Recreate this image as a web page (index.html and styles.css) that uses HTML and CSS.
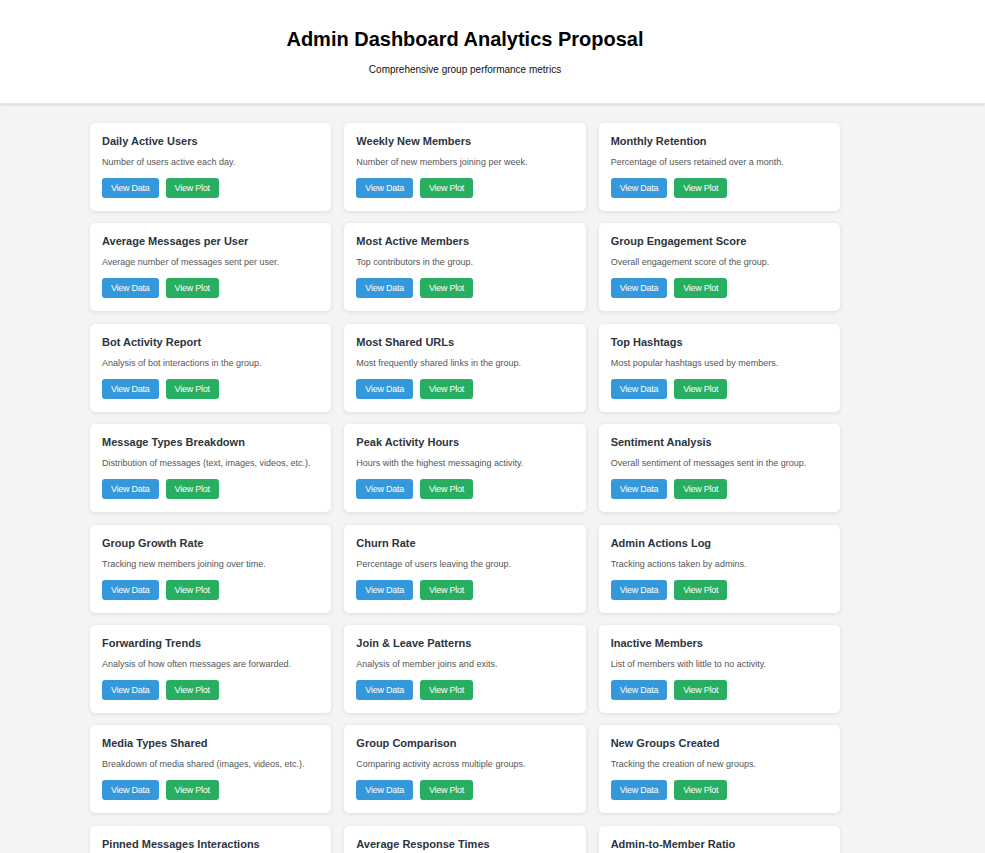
FILE: index.html
```html
<!DOCTYPE html>
<html lang="en">
<head>
<meta charset="utf-8">
<title>Admin Dashboard Analytics Proposal</title>
<link rel="stylesheet" href="styles.css">
</head>
<body>
<header class="header">
  <div class="header-inner">
    <h1 class="title">Admin Dashboard Analytics Proposal</h1>
    <p class="subtitle">Comprehensive group performance metrics</p>
  </div>
</header>
<main class="main">
  <div class="grid">
    <div class="card"><h2 class="card-title">Daily Active Users</h2><p class="card-desc">Number of users active each day.</p><div class="actions"><button class="btn btn-data">View Data</button><button class="btn btn-plot">View Plot</button></div></div>
    <div class="card"><h2 class="card-title">Weekly New Members</h2><p class="card-desc">Number of new members joining per week.</p><div class="actions"><button class="btn btn-data">View Data</button><button class="btn btn-plot">View Plot</button></div></div>
    <div class="card"><h2 class="card-title">Monthly Retention</h2><p class="card-desc">Percentage of users retained over a month.</p><div class="actions"><button class="btn btn-data">View Data</button><button class="btn btn-plot">View Plot</button></div></div>
    <div class="card"><h2 class="card-title">Average Messages per User</h2><p class="card-desc">Average number of messages sent per user.</p><div class="actions"><button class="btn btn-data">View Data</button><button class="btn btn-plot">View Plot</button></div></div>
    <div class="card"><h2 class="card-title">Most Active Members</h2><p class="card-desc">Top contributors in the group.</p><div class="actions"><button class="btn btn-data">View Data</button><button class="btn btn-plot">View Plot</button></div></div>
    <div class="card"><h2 class="card-title">Group Engagement Score</h2><p class="card-desc">Overall engagement score of the group.</p><div class="actions"><button class="btn btn-data">View Data</button><button class="btn btn-plot">View Plot</button></div></div>
    <div class="card"><h2 class="card-title">Bot Activity Report</h2><p class="card-desc">Analysis of bot interactions in the group.</p><div class="actions"><button class="btn btn-data">View Data</button><button class="btn btn-plot">View Plot</button></div></div>
    <div class="card"><h2 class="card-title">Most Shared URLs</h2><p class="card-desc">Most frequently shared links in the group.</p><div class="actions"><button class="btn btn-data">View Data</button><button class="btn btn-plot">View Plot</button></div></div>
    <div class="card"><h2 class="card-title">Top Hashtags</h2><p class="card-desc">Most popular hashtags used by members.</p><div class="actions"><button class="btn btn-data">View Data</button><button class="btn btn-plot">View Plot</button></div></div>
    <div class="card"><h2 class="card-title">Message Types Breakdown</h2><p class="card-desc">Distribution of messages (text, images, videos, etc.).</p><div class="actions"><button class="btn btn-data">View Data</button><button class="btn btn-plot">View Plot</button></div></div>
    <div class="card"><h2 class="card-title">Peak Activity Hours</h2><p class="card-desc">Hours with the highest messaging activity.</p><div class="actions"><button class="btn btn-data">View Data</button><button class="btn btn-plot">View Plot</button></div></div>
    <div class="card"><h2 class="card-title">Sentiment Analysis</h2><p class="card-desc">Overall sentiment of messages sent in the group.</p><div class="actions"><button class="btn btn-data">View Data</button><button class="btn btn-plot">View Plot</button></div></div>
    <div class="card"><h2 class="card-title">Group Growth Rate</h2><p class="card-desc">Tracking new members joining over time.</p><div class="actions"><button class="btn btn-data">View Data</button><button class="btn btn-plot">View Plot</button></div></div>
    <div class="card"><h2 class="card-title">Churn Rate</h2><p class="card-desc">Percentage of users leaving the group.</p><div class="actions"><button class="btn btn-data">View Data</button><button class="btn btn-plot">View Plot</button></div></div>
    <div class="card"><h2 class="card-title">Admin Actions Log</h2><p class="card-desc">Tracking actions taken by admins.</p><div class="actions"><button class="btn btn-data">View Data</button><button class="btn btn-plot">View Plot</button></div></div>
    <div class="card"><h2 class="card-title">Forwarding Trends</h2><p class="card-desc">Analysis of how often messages are forwarded.</p><div class="actions"><button class="btn btn-data">View Data</button><button class="btn btn-plot">View Plot</button></div></div>
    <div class="card"><h2 class="card-title">Join &amp; Leave Patterns</h2><p class="card-desc">Analysis of member joins and exits.</p><div class="actions"><button class="btn btn-data">View Data</button><button class="btn btn-plot">View Plot</button></div></div>
    <div class="card"><h2 class="card-title">Inactive Members</h2><p class="card-desc">List of members with little to no activity.</p><div class="actions"><button class="btn btn-data">View Data</button><button class="btn btn-plot">View Plot</button></div></div>
    <div class="card"><h2 class="card-title">Media Types Shared</h2><p class="card-desc">Breakdown of media shared (images, videos, etc.).</p><div class="actions"><button class="btn btn-data">View Data</button><button class="btn btn-plot">View Plot</button></div></div>
    <div class="card"><h2 class="card-title">Group Comparison</h2><p class="card-desc">Comparing activity across multiple groups.</p><div class="actions"><button class="btn btn-data">View Data</button><button class="btn btn-plot">View Plot</button></div></div>
    <div class="card"><h2 class="card-title">New Groups Created</h2><p class="card-desc">Tracking the creation of new groups.</p><div class="actions"><button class="btn btn-data">View Data</button><button class="btn btn-plot">View Plot</button></div></div>
    <div class="card"><h2 class="card-title">Pinned Messages Interactions</h2><p class="card-desc">Interactions with pinned messages.</p><div class="actions"><button class="btn btn-data">View Data</button><button class="btn btn-plot">View Plot</button></div></div>
    <div class="card"><h2 class="card-title">Average Response Times</h2><p class="card-desc">Average time taken to respond to messages.</p><div class="actions"><button class="btn btn-data">View Data</button><button class="btn btn-plot">View Plot</button></div></div>
    <div class="card"><h2 class="card-title">Admin-to-Member Ratio</h2><p class="card-desc">Ratio of admins to regular members.</p><div class="actions"><button class="btn btn-data">View Data</button><button class="btn btn-plot">View Plot</button></div></div>
  </div>
</main>
</body>
</html>
```

FILE: styles.css
```css
* { box-sizing: border-box; }

html, body {
  margin: 0;
  padding: 0;
  background: #f4f4f4;
  font-family: "Liberation Sans", Arial, sans-serif;
}

.header {
  background: #ffffff;
  height: 104px;
  box-shadow: 0 1px 3px rgba(0, 0, 0, 0.12);
  border-bottom: 1px solid #e6e6e6;
}

.header-inner {
  width: 930px;
  padding-top: 27px;
  text-align: center;
}

.title {
  margin: 0;
  font-size: 20px;
  font-weight: bold;
  line-height: 24px;
  color: #000000;
}

.subtitle {
  margin: 13px 0 0;
  font-size: 10px;
  line-height: 12px;
  color: #111111;
}

.main {
  width: 930px;
  padding-top: 19px;
}

.grid {
  width: 750px;
  margin: 0 auto;
  display: grid;
  grid-template-columns: repeat(3, 1fr);
  column-gap: 13px;
  row-gap: 12.4px;
}

.card {
  background: #ffffff;
  border-radius: 5px;
  box-shadow: 0 1px 4px rgba(0, 0, 0, 0.1);
  padding: 12px 12px 14px;
  height: 88px;
}

.card-title {
  margin: 0;
  font-size: 11px;
  font-weight: bold;
  line-height: 13px;
  color: #2c3440;
}

.card-desc {
  margin: 9px 0 0;
  font-size: 9px;
  line-height: 11px;
  color: #555555;
}

.actions {
  display: flex;
  gap: 7px;
  margin-top: 10px;
}

.btn {
  border: none;
  border-radius: 3px;
  height: 20px;
  padding: 0 9px;
  font-family: "Liberation Sans", Arial, sans-serif;
  font-size: 9px;
  letter-spacing: -0.25px;
  color: #ffffff;
  cursor: pointer;
}

.btn-data { background: #3498db; }
.btn-plot { background: #27ae60; }
```
